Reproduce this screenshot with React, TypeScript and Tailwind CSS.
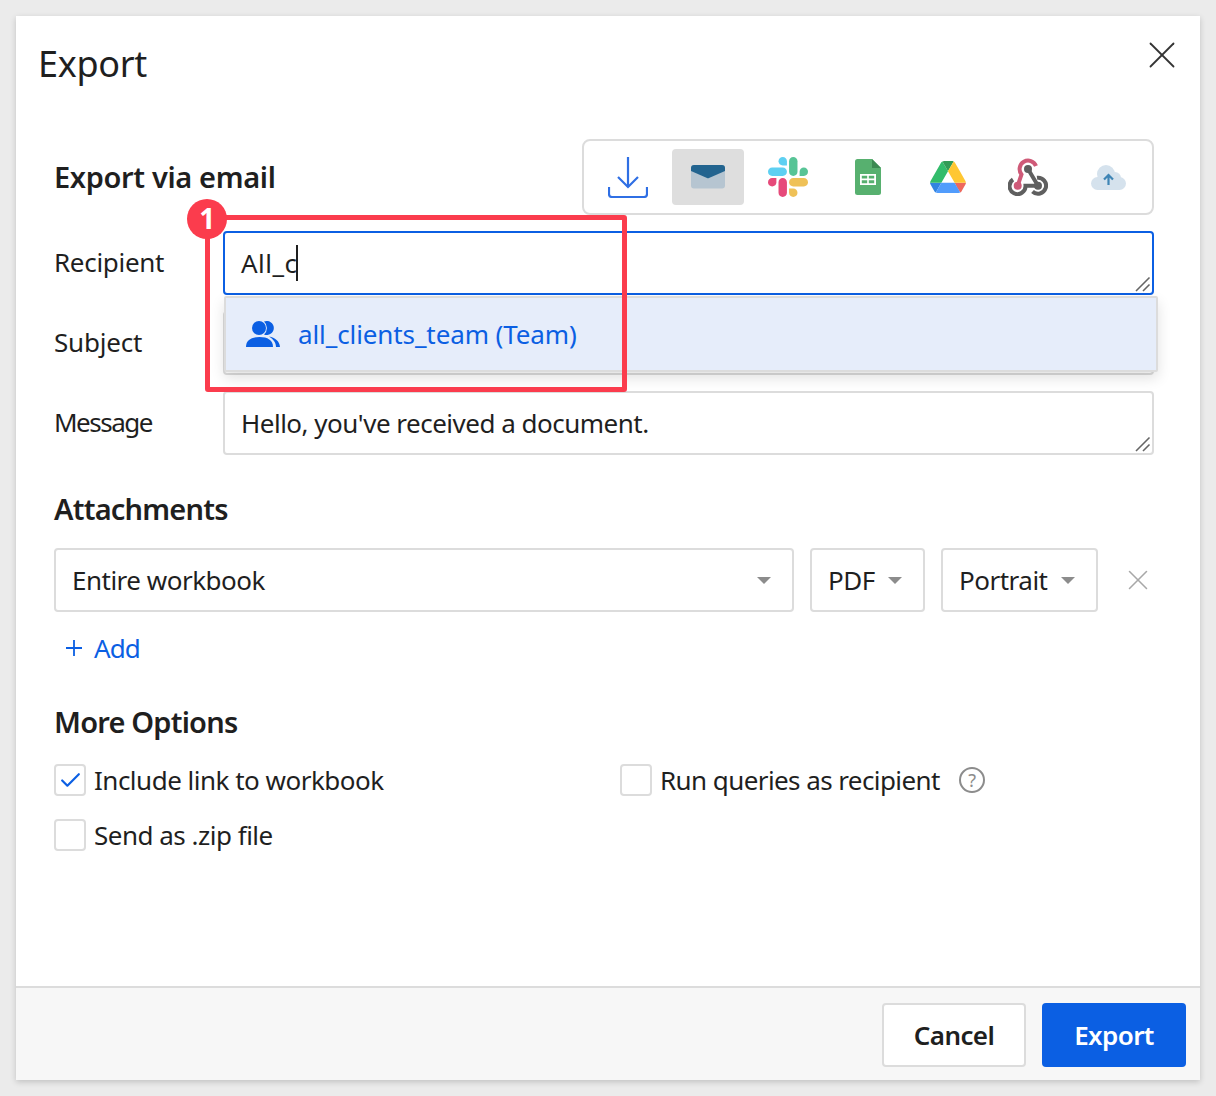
import { Check, X } from 'lucide-react'

function Caret() {
  return <span className="w-0 h-0 border-x-[7px] border-x-transparent border-t-[7px] border-t-[#8c8c8c]" />
}

function Grip() {
  return (
    <svg className="absolute right-0 bottom-0" width="18" height="18" viewBox="0 0 18 18" fill="none" stroke="#666" strokeWidth="1.6">
      <path d="M2 16 L15.5 2.5" />
      <path d="M9 16 L15.5 9.5" />
    </svg>
  )
}

function DownloadIcon() {
  return (
    <svg width="40" height="41" viewBox="0 0 40 41" fill="none" stroke="#2f6fe4" strokeWidth="2.2">
      <path d="M20 0 V30" />
      <path d="M10 20 L20 30 L30 20" />
      <path d="M1 30 V37 Q1 40 4 40 H36 Q39 40 39 37 V30" />
    </svg>
  )
}

function MailIcon() {
  return (
    <svg width="34" height="24" viewBox="0 0 34 24">
      <rect x="0" y="0" width="34" height="23.5" rx="3" fill="#b6c5d1" />
      <path d="M0 3 Q0 0 3 0 H31 Q34 0 34 3 V6 L18 13 Q17 13.4 16 13 L0 6 Z" fill="#23648f" />
    </svg>
  )
}

function SlackIcon() {
  return (
    <svg width="40" height="40" viewBox="0 0 122.8 122.8" opacity="0.8">
      <path fill="#e01e5a" d="M25.8 77.6c0 7.1-5.8 12.9-12.9 12.9S0 84.7 0 77.6s5.8-12.9 12.9-12.9h12.9v12.9z" />
      <path fill="#e01e5a" d="M32.3 77.6c0-7.1 5.8-12.9 12.9-12.9s12.9 5.8 12.9 12.9v32.3c0 7.1-5.8 12.9-12.9 12.9s-12.9-5.8-12.9-12.9V77.6z" />
      <path fill="#36c5f0" d="M45.2 25.8c-7.1 0-12.9-5.8-12.9-12.9S38.1 0 45.2 0s12.9 5.8 12.9 12.9v12.9H45.2z" />
      <path fill="#36c5f0" d="M45.2 32.3c7.1 0 12.9 5.8 12.9 12.9s-5.8 12.9-12.9 12.9H12.9C5.8 58.1 0 52.3 0 45.2s5.8-12.9 12.9-12.9h32.3z" />
      <path fill="#2eb67d" d="M97 45.2c0-7.1 5.8-12.9 12.9-12.9s12.9 5.8 12.9 12.9-5.8 12.9-12.9 12.9H97V45.2z" />
      <path fill="#2eb67d" d="M90.5 45.2c0 7.1-5.8 12.9-12.9 12.9s-12.9-5.8-12.9-12.9V12.9C64.7 5.8 70.5 0 77.6 0s12.9 5.8 12.9 12.9v32.3z" />
      <path fill="#ecb22e" d="M77.6 97c7.1 0 12.9 5.8 12.9 12.9s-5.8 12.9-12.9 12.9-12.9-5.8-12.9-12.9V97h12.9z" />
      <path fill="#ecb22e" d="M77.6 90.5c-7.1 0-12.9-5.8-12.9-12.9s5.8-12.9 12.9-12.9h32.3c7.1 0 12.9 5.8 12.9 12.9s-5.8 12.9-12.9 12.9H77.6z" />
    </svg>
  )
}

function SheetsIcon() {
  return (
    <svg width="26" height="36" viewBox="0 0 26 36">
      <path d="M2.5 0 H17 L26 9 V33.5 Q26 36 23.5 36 H2.5 Q0 36 0 33.5 V2.5 Q0 0 2.5 0 Z" fill="#57b06f" />
      <path d="M17 0 L26 9 H17 Z" fill="#3b8a52" />
      <path d="M5 15 H21 V26 H5 Z M6.8 16.8 V19.6 H12.2 V16.8 Z M13.8 16.8 V19.6 H19.2 V16.8 Z M6.8 21.2 V24.2 H12.2 V21.2 Z M13.8 21.2 V24.2 H19.2 V21.2 Z" fill="#fff" fillRule="evenodd" />
    </svg>
  )
}

function DriveIcon() {
  return (
    <svg width="36" height="32" viewBox="0 0 87.3 78" opacity="0.8">
      <path fill="#0066da" d="m6.6 66.85 3.85 6.65c.8 1.4 1.95 2.5 3.3 3.3l13.75-23.8h-27.5c0 1.55.4 3.1 1.2 4.5z" />
      <path fill="#00ac47" d="m43.65 25-13.75-23.8c-1.35.8-2.5 1.9-3.3 3.3l-25.4 44a9.06 9.06 0 0 0 -1.2 4.5h27.5z" />
      <path fill="#ea4335" d="m73.55 76.8c1.35-.8 2.5-1.9 3.3-3.3l1.6-2.75 7.65-13.25c.8-1.4 1.2-2.95 1.2-4.5h-27.502l5.852 11.5z" />
      <path fill="#00832d" d="m43.65 25 13.75-23.8c-1.35-.8-2.9-1.2-4.5-1.2h-18.5c-1.6 0-3.15.45-4.5 1.2z" />
      <path fill="#2684fc" d="m59.8 53h-32.3l-13.75 23.8c1.35.8 2.9 1.2 4.5 1.2h50.8c1.6 0 3.15-.45 4.5-1.2z" />
      <path fill="#ffba00" d="m73.4 26.5-12.7-22c-.8-1.4-1.95-2.5-3.3-3.3l-13.75 23.8 16.15 28h27.45c0-1.55-.4-3.1-1.2-4.5z" />
    </svg>
  )
}

function WebhookIcon() {
  return (
    <svg width="40" height="38" viewBox="0 0 40 38" fill="none" strokeWidth="4">
      <path stroke="#5f5f5f" d="M30 27.7 H17.5 A8 8 0 1 1 5 21.5" />
      <path stroke="#5f5f5f" d="M20 11 L30 27.7 M29 19.8 A8 8 0 1 1 24.5 33.5" />
      <path stroke="#cf5a78" d="M9.7 27.7 L13.5 16.5 A8.5 8.5 0 1 1 28 8" />
      <circle cx="20" cy="11" r="4" fill="#5f5f5f" />
      <circle cx="30" cy="27.7" r="4" fill="#5f5f5f" />
      <circle cx="9.7" cy="27.7" r="4" fill="#cf5a78" />
    </svg>
  )
}

function CloudIcon() {
  return (
    <svg width="35" height="25" viewBox="0 0 35 25">
      <g fill="#d5e2ed">
        <circle cx="6.5" cy="18.5" r="6.5" />
        <circle cx="15" cy="9" r="9" />
        <circle cx="24" cy="13" r="6" />
        <circle cx="28.5" cy="18.5" r="6.5" />
        <rect x="6.5" y="12" width="22" height="13" />
      </g>
      <path d="M17.5 20 V10 M13 14.6 L17.5 10 L22 14.6" fill="none" stroke="#3f85b5" strokeWidth="2.2" />
    </svg>
  )
}

function TeamIcon() {
  return (
    <svg width="34" height="26" viewBox="0 0 34 26" fill="#0b5fe3">
      <circle cx="13" cy="7" r="7" />
      <path d="M0 26 C0 19 5.5 16 13.5 16 C21.5 16 27 19 27 26 Z" />
      <path d="M18 0.6 A7 7 0 1 1 18 13.4 A8.5 8.5 0 0 0 18 0.6 Z" />
      <path d="M23 15.5 C29 16.5 33.5 20 34 26 H30 C30 21.5 27 18 23 15.5 Z" />
    </svg>
  )
}

function TextRow({
  label,
  labelClass,
  children,
  focused,
}: {
  label: string
  labelClass: string
  children?: React.ReactNode
  focused?: boolean
}) {
  return (
    <div className="flex items-center h-16">
      <span className={`w-[169px] shrink-0 -mt-[2px] ${labelClass}`}>{label}</span>
      <div
        className={`relative flex-1 h-16 rounded-[4px] border-2 flex items-center px-4 ${focused ? 'border-[#0b5fe3]' : 'border-[#dcdcdc]'}`}
      >
        {children}
        <Grip />
      </div>
    </div>
  )
}

function Checkbox({ checked, label }: { checked?: boolean; label: string }) {
  return (
    <div className="flex items-center gap-[8px] h-8">
      <span className="w-8 h-8 rounded-[4px] border-2 border-[#dcdcdc] flex items-center justify-center">
        {checked ? <Check className="w-[25px] h-[25px] text-[#0b5fe3]" strokeWidth={2.1} /> : null}
      </span>
      <span>{label}</span>
    </div>
  )
}

export default function App() {
  return (
    <div className="w-[1216px] h-[1096px] bg-[#ebebeb] p-4 font-['Noto_Sans',sans-serif] text-[26px] tracking-[-0.5px] text-[#1f1f1f]">
      <div className="relative w-[1184px] h-[1064px] bg-white shadow-[0_2px_6px_rgba(0,0,0,0.18)] flex flex-col">
        <div className="flex-1 min-h-0">
          <div className="flex items-start justify-between pl-[22px] pr-[15px] pt-[22px]">
            <h1 className="text-[36px] leading-[52px] tracking-[-0.3px]">Export</h1>
            <button className="mt-[-6px] text-[#333]">
              <X className="w-[46px] h-[46px]" strokeWidth={0.95} />
            </button>
          </div>

          <div className="pl-[38px] pr-[46px] mt-[49px]">
            <div className="flex items-center justify-between h-[76px]">
              <h2 className="text-[29px] font-semibold tracking-[-0.35px]">Export via email</h2>
              <div className="w-[572px] h-[76px] rounded-[8px] border-2 border-[#dcdcdc] flex items-center gap-2 px-2">
                <span className="w-[72px] h-14 flex items-center justify-center"><DownloadIcon /></span>
                <span className="w-[72px] h-14 flex items-center justify-center rounded-[4px] bg-[#dedede]"><MailIcon /></span>
                <span className="w-[72px] h-14 flex items-center justify-center"><SlackIcon /></span>
                <span className="w-[72px] h-14 flex items-center justify-center"><SheetsIcon /></span>
                <span className="w-[72px] h-14 flex items-center justify-center"><DriveIcon /></span>
                <span className="w-[72px] h-14 flex items-center justify-center"><WebhookIcon /></span>
                <span className="w-[72px] h-14 flex items-center justify-center"><CloudIcon /></span>
              </div>
            </div>

            <div className="mt-4 flex flex-col gap-4">
              <TextRow label="Recipient" labelClass="tracking-[-0.3px]" focused>
                <span className="tracking-[0.5px]">All_c</span>
                <span className="w-[2px] h-9 bg-[#1f1f1f] ml-[-2px]" />
              </TextRow>
              <TextRow label="Subject" labelClass="tracking-[-0.2px]" />
              <TextRow label="Message" labelClass="tracking-[-1.5px]">
                <span>Hello, you've received a document.</span>
              </TextRow>
            </div>

            <h2 className="text-[29px] font-semibold tracking-[-0.8px] mt-[31px] leading-[46px]">Attachments</h2>
            <div className="flex items-center gap-4 mt-[16px]">
              <div className="w-[740px] shrink-0 h-16 rounded-[4px] border-2 border-[#dcdcdc] flex items-center justify-between pl-4 pr-[21px]">
                <span>Entire workbook</span>
                <Caret />
              </div>
              <div className="w-[115px] shrink-0 h-16 rounded-[4px] border-2 border-[#dcdcdc] flex items-center justify-between pl-4 pr-[21px]">
                <span>PDF</span>
                <Caret />
              </div>
              <div className="w-[157px] shrink-0 h-16 rounded-[4px] border-2 border-[#dcdcdc] flex items-center justify-between pl-4 pr-[21px]">
                <span>Portrait</span>
                <Caret />
              </div>
              <X className="ml-[7px] shrink-0 w-[34px] h-[34px] text-[#a8a8a8]" strokeWidth={1.1} />
            </div>

            <div className="flex items-center gap-[9px] mt-[18px] h-9 pl-[9px] text-[#0b5fe3]">
              <svg width="22" height="22" viewBox="0 0 22 22" stroke="#0b5fe3" strokeWidth="1.8">
                <path d="M11 3 V19 M3 11 H19" />
              </svg>
              <span className="tracking-[-0.9px]">Add</span>
            </div>

            <h2 className="text-[29px] font-semibold tracking-[-0.8px] mt-[33px] leading-[46px]">More Options</h2>
            <div className="flex mt-[19px]">
              <div className="w-[566px] flex flex-col gap-[23px]">
                <Checkbox checked label="Include link to workbook" />
                <Checkbox label="Send as .zip file" />
              </div>
              <div className="flex items-start gap-[19px] tracking-[-0.58px]">
                <Checkbox label="Run queries as recipient" />
                <span className="w-[26px] h-[26px] mt-[3px] rounded-full border-2 border-[#8c8c8c] text-[#8c8c8c] text-[18px] leading-[22px] text-center">?</span>
              </div>
            </div>
          </div>
        </div>

        <div className="h-[94px] border-t-2 border-[#dcdcdc] bg-[#f7f7f7] flex items-start justify-end gap-4 pr-[14px] pt-[15px]">
          <button className="w-[144px] h-16 rounded-[4px] border-2 border-[#dcdcdc] bg-white font-semibold tracking-[-0.6px]">Cancel</button>
          <button className="w-[144px] h-16 rounded-[4px] bg-[#0b5fe3] text-white font-semibold tracking-[-0.6px]">Export</button>
        </div>

        <div className="absolute left-[208px] top-[280px] w-[934px] h-[76px] rounded-[2px] border-2 border-[#dcdcdc] bg-[#e6edfa] shadow-[0_6px_14px_rgba(0,0,0,0.12)] flex items-center gap-[18px] pl-[20px] text-[#0b5fe3] tracking-[-0.1px]">
          <TeamIcon />
          <span>all_clients_team (Team)</span>
        </div>
        <div className="absolute left-[189px] top-[199px] w-[422px] h-[177px] rounded-[3px] border-[5px] border-[#fb3c4d]" />
        <div className="absolute left-[171px] top-[183px] w-10 h-10 rounded-full bg-[#fb3c4d] text-white font-bold text-[28px] leading-none flex items-center justify-center pb-[2px]">1</div>
      </div>
    </div>
  )
}
